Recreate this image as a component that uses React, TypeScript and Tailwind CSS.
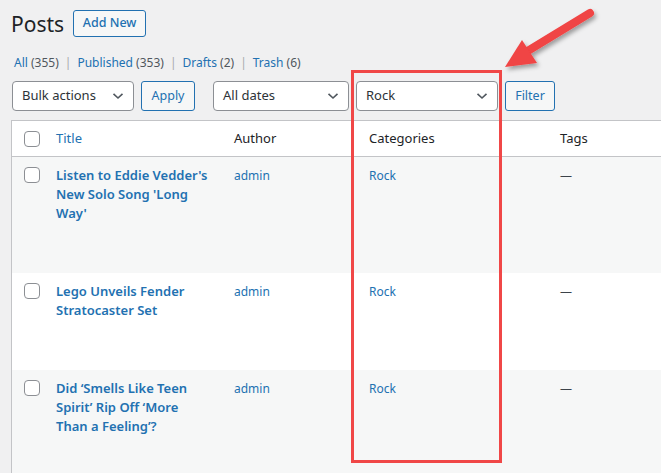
import React from 'react';

const font = { fontFamily: '"Noto Sans", "Segoe UI", Roboto, sans-serif' };

function Chevron() {
  return (
    <svg width="12" height="8" viewBox="0 0 12 8" className="shrink-0">
      <path d="M1.5 1.8 L6 6 L10.5 1.8" fill="none" stroke="#50575e" strokeWidth="1.6" />
    </svg>
  );
}

function Select({ label, width }: { label: string; width: string }) {
  return (
    <div className={`${width} h-[30px] bg-white border border-[#8c8f94] rounded-[4px] flex items-center justify-between pl-[9px] pr-[9px] text-[13px] text-[#2c3338]`}>
      <span>{label}</span>
      <Chevron />
    </div>
  );
}

function Button({ label, width }: { label: string; width: string }) {
  return (
    <div className={`${width} h-[30px] bg-[#f6f7f7] border border-[#2271b1] rounded-[3px] flex items-center justify-center text-[12.5px] text-[#2271b1]`}>
      {label}
    </div>
  );
}

function Checkbox() {
  return <div className="w-[16px] h-[16px] bg-white border border-[#8c8f94] rounded-[4px]" />;
}

const rows = [
  { title: "Listen to Eddie Vedder's New Solo Song 'Long Way'", h: 'h-[116px]', bg: 'bg-[#f6f7f7]' },
  { title: 'Lego Unveils Fender Stratocaster Set', h: 'h-[97px]', bg: 'bg-white' },
  { title: 'Did ‘Smells Like Teen Spirit’ Rip Off ‘More Than a Feeling’?', h: 'h-[110px]', bg: 'bg-[#f6f7f7]' },
];

const cols = 'grid grid-cols-[35px_178px_135px_191px_140px]';

export default function App() {
  return (
    <div className="relative w-[661px] h-[473px] overflow-hidden bg-[#f0f0f1] text-[#3c434a]" style={font}>
      <div className="pl-[11px] pt-[10px] flex items-center gap-[9px]">
        <h1 className="text-[21px] leading-[26px] text-[#1d2327] font-normal">Posts</h1>
        <div className="h-[27px] w-[73px] bg-[#f6f7f7] border border-[#2271b1] rounded-[3px] flex items-center justify-center text-[12.5px] font-medium text-[#2271b1]">
          Add New
        </div>
      </div>

      <div className="pl-[14px] mt-[17px] flex items-center text-[12px] leading-[18px] gap-[6px]">
        <span className="text-[#2271b1]">All <span className="text-[#50575e]">(355)</span></span>
        <span className="text-[#a7aaad]">|</span>
        <span className="text-[#2271b1]">Published <span className="text-[#50575e]">(353)</span></span>
        <span className="text-[#a7aaad]">|</span>
        <span className="text-[#2271b1]">Drafts <span className="text-[#50575e]">(2)</span></span>
        <span className="text-[#a7aaad]">|</span>
        <span className="text-[#2271b1]">Trash <span className="text-[#50575e]">(6)</span></span>
      </div>

      <div className="pl-[12px] mt-[9px] flex items-center">
        <Select label="Bulk actions" width="w-[122px]" />
        <div className="ml-[7px]"><Button label="Apply" width="w-[54px]" /></div>
        <div className="ml-[18px]"><Select label="All dates" width="w-[136px]" /></div>
        <div className="ml-[7px]"><Select label="Rock" width="w-[142px]" /></div>
        <div className="ml-[7px]"><Button label="Filter" width="w-[50px]" /></div>
      </div>

      <div className="ml-[11px] mt-[9px] w-[700px] border-l border-t border-[#c3c4c7] bg-white">
        <div className={`${cols} h-[36px] items-center border-b border-[#c3c4c7] text-[13px]`}>
          <div className="pl-[12px]"><Checkbox /></div>
          <div className="pl-[9px] text-[#2271b1]">Title</div>
          <div className="pl-[9px] text-[#1d2327]">Author</div>
          <div className="pl-[9px] text-[#1d2327]">Categories</div>
          <div className="pl-[9px] text-[#1d2327]">Tags</div>
        </div>
        {rows.map((r, i) => (
          <div key={i} className={`${cols} ${r.h} ${r.bg} items-start`}>
            <div className="pl-[12px] pt-[10px]"><Checkbox /></div>
            <div className="pl-[9px] pr-[14px] pt-[9px] text-[13px] leading-[19px] font-semibold text-[#2271b1]">{r.title}</div>
            <div className="pl-[9px] pt-[10px] text-[12px] leading-[18px] text-[#2271b1]">admin</div>
            <div className="pl-[9px] pt-[10px] text-[12px] leading-[18px] text-[#2271b1]">Rock</div>
            <div className="pl-[9px] pt-[10px] text-[12px] leading-[18px] text-[#3c434a]">—</div>
          </div>
        ))}
      </div>

      <div className="absolute left-[351px] top-[70px] w-[151px] h-[393px] border-[3px] border-[#f04747]" />

      <svg className="absolute left-0 top-0" width="661" height="473" viewBox="0 0 661 473">
        <defs>
          <filter id="sh" x="-20%" y="-20%" width="140%" height="140%">
            <feDropShadow dx="2" dy="3" stdDeviation="2" floodColor="#000" floodOpacity="0.35" />
          </filter>
        </defs>
        <g filter="url(#sh)">
          <line x1="590" y1="13" x2="526" y2="52" stroke="#f04444" strokeWidth="8" strokeLinecap="round" />
          <polygon points="505,67 522,40 537,63" fill="#f04444" />
        </g>
      </svg>
    </div>
  );
}
